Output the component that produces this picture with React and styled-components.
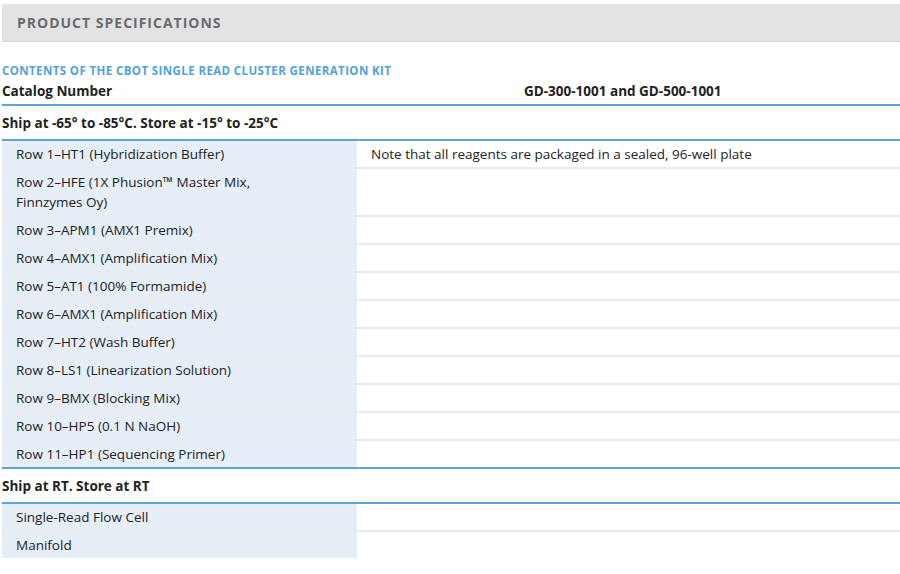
import React from 'react';
import styled, { createGlobalStyle } from 'styled-components';

const Global = createGlobalStyle`
  body { margin: 0; background: #fff; font-family: "Open Sans", Lato, sans-serif; color: #222; }
`;

const Page = styled.div`
  padding: 4px 0 0 2px;
  width: 898px;
`;

const Header = styled.div`
  background: #e3e3e5;
  height: 37px;
  display: flex;
  align-items: center;
  padding-left: 15px;
  font-size: 14px;
  font-weight: 700;
  letter-spacing: 1px;
  color: #6b6b6b;
  border-bottom: 1px dotted #ccc;
`;

const Subtitle = styled.div`
  margin-top: 21px;
  font-size: 11.5px;
  font-weight: 700;
  letter-spacing: 0.4px;
  color: #4ea3dc;
`;

const CatalogRow = styled.div`
  display: flex;
  height: 26px;
  align-items: center;
  border-bottom: 2px solid #5aa6da;
  font-size: 13.5px;
  font-weight: 700;
  span:first-child { width: 522px; }
`;

const Section = styled.div`
  height: 33px;
  display: flex;
  align-items: center;
  font-size: 13.5px;
  font-weight: 700;
  border-bottom: 2px solid #5aa6da;
  border-top: ${p => (p.$top ? '2px solid #5aa6da' : 'none')};
`;

const Row = styled.div`
  display: grid;
  grid-template-columns: 355px 1fr;
  font-size: 13.5px;
  border-bottom: ${p => (p.$last ? 'none' : '2px solid #ebebeb')};
  & > div { padding: 3px 14px; line-height: 20px; }
  & > div:first-child { background: #e6eef8; }
`;

const cold = [
  'Row 1–HT1 (Hybridization Buffer)',
  'Row 2–HFE (1X Phusion™ Master Mix, Finnzymes Oy)',
  'Row 3–APM1 (AMX1 Premix)',
  'Row 4–AMX1 (Amplification Mix)',
  'Row 5–AT1 (100% Formamide)',
  'Row 6–AMX1 (Amplification Mix)',
  'Row 7–HT2 (Wash Buffer)',
  'Row 8–LS1 (Linearization Solution)',
  'Row 9–BMX (Blocking Mix)',
  'Row 10–HP5 (0.1 N NaOH)',
  'Row 11–HP1 (Sequencing Primer)',
];

export default function App() {
  return (
    <Page>
      <Global />
      <Header>PRODUCT SPECIFICATIONS</Header>
      <Subtitle>CONTENTS OF THE CBOT SINGLE READ CLUSTER GENERATION KIT</Subtitle>
      <CatalogRow>
        <span>Catalog Number</span>
        <span>GD-300-1001 and GD-500-1001</span>
      </CatalogRow>
      <Section>Ship at -65° to -85°C. Store at -15° to -25°C</Section>
      {cold.map((r, i) => (
        <Row key={r} $last={i === cold.length - 1}>
          <div>{i === 1 ? <>Row 2–HFE (1X Phusion™ Master Mix,<br />Finnzymes Oy)</> : r}</div>
          <div>{i === 0 ? 'Note that all reagents are packaged in a sealed, 96-well plate' : ''}</div>
        </Row>
      ))}
      <Section $top>Ship at RT. Store at RT</Section>
      <Row><div>Single-Read Flow Cell</div><div /></Row>
      <Row $last><div>Manifold</div><div /></Row>
    </Page>
  );
}
